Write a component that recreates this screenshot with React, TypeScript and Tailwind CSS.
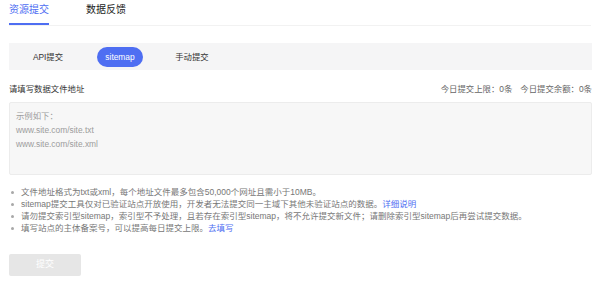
import { useState } from "react";

const FONT = "font-['Liberation_Sans','Noto_Sans_CJK_SC',sans-serif]";

const modes = ["API提交", "sitemap", "手动提交"];

function Tip({ children }: { children: React.ReactNode }) {
  return (
    <li className="flex items-center h-[12px]">
      <span className="mx-[2px] mr-[7px] h-[3px] w-[3px] shrink-0 rounded-full bg-[#a8a8a8]" />
      <span>{children}</span>
    </li>
  );
}

export default function App() {
  const [mode, setMode] = useState("sitemap");
  const [value, setValue] = useState("");

  return (
    <div className={`${FONT} h-[286px] w-[600px] overflow-hidden bg-white px-[9px] text-[#333]`}>
      {/* top tabs */}
      <div className="flex h-[26px] gap-[37px] border-b border-[#f2f2f2]">
        <div className="h-[25px] border-b-2 border-[#4e6ef2] pt-[3px] text-[10px] leading-[14px] text-[#4e6ef2]">
          资源提交
        </div>
        <div className="h-[25px] pt-[3px] text-[10px] leading-[14px] text-[#222]">数据反馈</div>
      </div>

      {/* submit mode */}
      <div className="mt-[17px] flex h-[27px] w-[583px] items-center bg-[#f5f5f6] pl-[3px]">
        {modes.map((m) => (
          <button
            key={m}
            onClick={() => setMode(m)}
            className="flex w-[72px] justify-center text-[8.4px] leading-[12px]"
          >
            <span
              className={
                m === mode
                  ? "rounded-full bg-[#4e6ef2] px-[8px] py-[4px] text-white"
                  : "px-[8px] py-[4px] text-[#333]"
              }
            >
              {m}
            </span>
          </button>
        ))}
      </div>

      <div className="mt-[13px] flex w-[583px] items-center justify-between text-[8.4px] leading-[12px]">
        <span className="text-[#333]">请填写数据文件地址</span>
        <span className="text-[#666]">
          今日提交上限：0条<span className="ml-[8px]">今日提交余额：0条</span>
        </span>
      </div>

      <textarea
        value={value}
        onChange={(e) => setValue(e.target.value)}
        placeholder={"示例如下：\nwww.site.com/site.txt\nwww.site.com/site.xml"}
        className="mt-[7px] block h-[73px] w-[583px] resize-none rounded-[2px] border border-[#ececec] bg-[#f7f7f7] px-[6px] pt-[6px] text-[8.4px] leading-[14px] text-[#333] outline-none placeholder:text-[#9c9c9c]"
      />

      <ul className="mt-[11px] text-[8.5px] leading-[12px] text-[#777]">
        <Tip>文件地址格式为txt或xml，每个地址文件最多包含50,000个网址且需小于10MB。</Tip>
        <Tip>
          sitemap提交工具仅对已验证站点开放使用，开发者无法提交同一主域下其他未验证站点的数据。
          <span className="text-[#4e6ef2]">详细说明</span>
        </Tip>
        <Tip>请勿提交索引型sitemap，索引型不予处理，且若存在索引型sitemap，将不允许提交新文件；请删除索引型sitemap后再尝试提交数据。</Tip>
        <Tip>
          填写站点的主体备案号，可以提高每日提交上限。<span className="text-[#4e6ef2]">去填写</span>
        </Tip>
      </ul>

      <button
        disabled
        className="mt-[20px] flex h-[22px] w-[72px] items-center justify-center rounded-[2px] bg-[#e6e6e6] text-[9px] text-white"
      >
        提交
      </button>
    </div>
  );
}
